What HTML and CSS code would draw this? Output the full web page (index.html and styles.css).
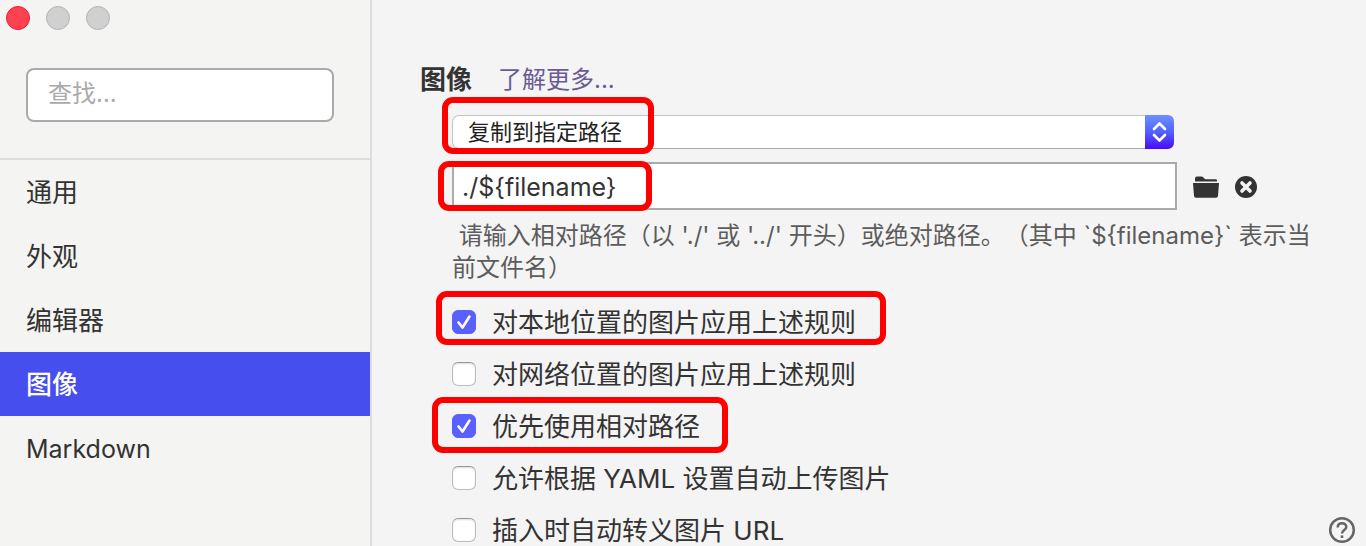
FILE: index.html
```html
<!DOCTYPE html>
<html lang="zh-CN">
<head>
<meta charset="utf-8">
<title>图像</title>
<link rel="stylesheet" href="styles.css">
</head>
<body>
<div class="window">
  <aside class="sidebar">
    <div class="traffic">
      <button class="light light-close" type="button" aria-label="关闭"></button>
      <button class="light" type="button" aria-label="最小化"></button>
      <button class="light" type="button" aria-label="缩放"></button>
    </div>
    <div class="search">
      <input class="search-input" type="search" placeholder="查找..." aria-label="查找">
    </div>
    <nav class="nav">
      <a class="nav-item" href="#general">通用</a>
      <a class="nav-item" href="#appearance">外观</a>
      <a class="nav-item" href="#editor">编辑器</a>
      <a class="nav-item nav-active" href="#image" aria-current="page">图像</a>
      <a class="nav-item nav-latin" href="#markdown">Markdown</a>
    </nav>
  </aside>
  <main class="content">
    <header class="section-head">
      <h1 class="title">图像</h1>
      <a class="more" href="#more">了解更多...</a>
    </header>
    <div class="section-body">
      <div class="select-field">
        <select class="select" aria-label="插入图片时">
          <option>复制到指定路径</option>
        </select>
        <svg class="stepper" viewBox="0 0 29 34" aria-hidden="true">
          <defs><linearGradient id="blue" x1="0" y1="0" x2="0" y2="1"><stop offset="0" stop-color="#6e90ff"/><stop offset="0.5" stop-color="#5062fc"/><stop offset="1" stop-color="#4b08fa"/></linearGradient></defs>
          <path d="M0 0H22Q29 0 29 7V27Q29 34 22 34H0Z" fill="url(#blue)"/>
          <path d="M9 14L14.500 8.500L20 14M9 20L14.500 25.500L20 20" fill="none" stroke="#fff" stroke-width="2.600" stroke-linecap="round" stroke-linejoin="round"/>
        </svg>
        <span class="mark mark-select"></span>
      </div>
      <div class="path-row">
        <div class="path-field">
          <input class="path-input" type="text" value="./${filename}" aria-label="路径">
          <span class="mark mark-path"></span>
        </div>
        <button class="icon-button" type="button" aria-label="选择文件夹">
          <svg width="26" height="22" viewBox="0 0 26 22"><path d="M2 5.500V2.500Q2 .5 4 .5H8.500Q10 .5 11 2L12 3.200H22.500Q24 3.200 24 4.500V5.500Z" fill="#333"/><path d="M0 7H26L25 20Q24.800 21.700 23 21.700H3Q1.200 21.700 1 20Z" fill="#333"/></svg>
        </button>
        <button class="icon-button" type="button" aria-label="清除">
          <svg width="22" height="22" viewBox="0 0 22 22"><circle cx="11" cy="11" r="11" fill="#333"/><path d="M7 7L15 15M15 7L7 15" stroke="#f4f4f4" stroke-width="3.600" stroke-linecap="round"/></svg>
        </button>
      </div>
      <p class="hint">&nbsp;请输入相对路径（以 './' 或 '../' 开头）或绝对路径。（其中 `${filename}` 表示当前文件名）</p>
      <div class="options">
        <div class="option"><label class="option-label"><input class="check" type="checkbox" checked><span class="option-text">对本地位置的图片应用上述规则</span></label><span class="mark mark-local"></span></div>
        <div class="option"><label class="option-label"><input class="check" type="checkbox"><span class="option-text">对网络位置的图片应用上述规则</span></label></div>
        <div class="option"><label class="option-label"><input class="check" type="checkbox" checked><span class="option-text">优先使用相对路径</span></label><span class="mark mark-relative"></span></div>
        <div class="option"><label class="option-label"><input class="check" type="checkbox"><span class="option-text">允许根据 YAML 设置自动上传图片</span></label></div>
        <div class="option"><label class="option-label"><input class="check" type="checkbox"><span class="option-text">插入时自动转义图片 URL</span></label></div>
      </div>
    </div>
  </main>
</div>
<button class="help" type="button" aria-label="帮助">
  <svg width="28" height="28" viewBox="0 0 28 28" fill="none" stroke="#666"><circle cx="14" cy="14" r="11.800" stroke-width="2.500"/><path d="M9.700 11.500C9.700 8.700 11.500 7.200 14 7.200S18.300 8.800 18.300 11C18.300 13.800 14 14.200 14 17.500" stroke-width="2.500"/><path d="M14 19.400V22" stroke-width="2.600"/></svg>
</button>
</body>
</html>
```

FILE: styles.css
```css
* { box-sizing: border-box; }

body {
  margin: 0;
  background: #f4f4f4;
  color: #333;
  font-family: Inter, "Noto Sans CJK SC", sans-serif;
  font-size: 26px;
  line-height: 32px;
  text-spacing-trim: space-all;
}

button { padding: 0; border: 0; background: none; }
input, select { font-family: inherit; color: inherit; }
a { text-decoration: none; }

.window { display: flex; height: 100vh; overflow: hidden; }

.sidebar {
  flex: 0 0 372px;
  background: #f4f4f2;
  border-right: 2px solid #dcdcdc;
}

.traffic { display: flex; gap: 16px; padding: 6px; }

.light {
  width: 24px;
  height: 24px;
  border: 1px solid #b4b4b4;
  border-radius: 50%;
  background: #d0d0d0;
}

.light-close { background: #ff4150; border-color: #f01a38; }

.search { padding: 32px 36px 36px 26px; border-bottom: 2px solid #dcdcdc; }

.search-input {
  display: block;
  width: 100%;
  height: 54px;
  padding: 0 20px 4px;
  border: 2px solid #aaa;
  border-radius: 8px;
  background: #fff;
  font-size: 24px;
  appearance: none;
}

.search-input::placeholder { color: #aaa; }

.nav-item { display: block; padding: 17px 26px 15px; color: #333; }
.nav-active { background: #474eee; color: #fff; font-weight: 500; }
.nav-latin { font-size: 25px; }

.content { flex: 1; min-width: 0; padding: 64px 32px 0 48px; }

.section-head { display: flex; gap: 26px; }
.title { margin: 0; font-size: 26px; font-weight: 700; }
.more { color: #6b5b95; font-size: 24px; }

.section-body { padding: 19px 0 0 32px; }

.select-field { position: relative; max-width: 722px; margin-bottom: 13px; }

.select {
  display: block;
  width: 100%;
  height: 34px;
  padding: 0 40px 0 15px;
  border: 1px solid #c4c4c4;
  border-bottom-color: #aaa;
  border-radius: 7px;
  background: #fff;
  color: #222;
  font-size: 22px;
  appearance: none;
}

.stepper { position: absolute; top: 0; right: 0; width: 29px; height: 34px; pointer-events: none; }

.path-row { display: flex; align-items: center; gap: 16px; }
.path-field { position: relative; flex: 0 1 725px; }

.path-input {
  display: block;
  width: 100%;
  height: 48px;
  padding: 2px 8px 0;
  border: 2px solid #aaa;
  background: #fff;
  font-size: 25px;
}

.icon-button { display: flex; padding-top: 2px; }

.hint { margin: 10px 0 12px; color: #5c5c5c; font-size: 24px; }

.option { position: relative; display: flex; height: 52px; align-items: center; }
.option-label { display: flex; align-items: center; gap: 16px; }
.option-text { padding-top: 2px; }

.check {
  width: 24px;
  height: 24px;
  margin: 0;
  border: 1px solid #bcbcbc;
  border-top-color: #999;
  border-radius: 6px;
  background: #fff;
  box-shadow: inset 0 1px 2px #ddd;
  appearance: none;
}

.check:checked {
  border-color: #5a60ff;
  background: #5a60ff url("data:image/svg+xml,%3Csvg xmlns='http://www.w3.org/2000/svg' viewBox='0 0 22 22'%3E%3Cpath d='M5.500 11.500L9.500 16.500L16.500 5.500' fill='none' stroke='white' stroke-width='2.600' stroke-linecap='round' stroke-linejoin='round'/%3E%3C/svg%3E") center / 22px 22px no-repeat;
  box-shadow: none;
}

.mark {
  position: absolute;
  border: 6px solid #f00;
  border-radius: 11px;
  pointer-events: none;
}

.mark-select { top: -18px; left: -10px; width: 212px; height: 57px; }
.mark-path { top: -1px; left: -14px; width: 214px; height: 50px; }
.mark-local { top: -5px; left: -16px; width: 450px; height: 54px; }
.mark-relative { top: -3px; left: -20px; width: 296px; height: 56px; }

.help { position: fixed; right: 10px; bottom: 2px; display: flex; }
```
